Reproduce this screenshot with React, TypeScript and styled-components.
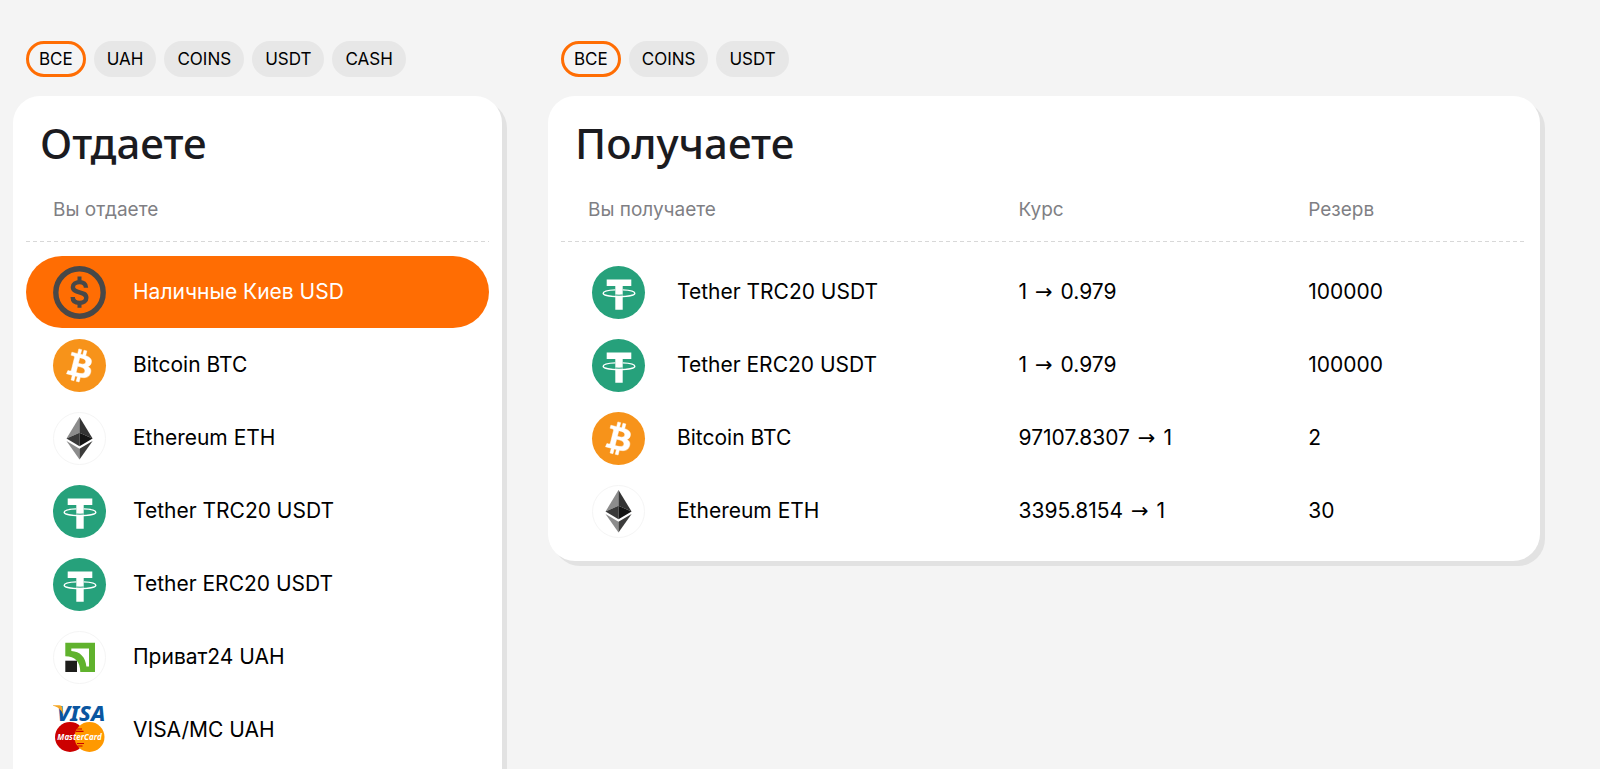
import React, { useState } from 'react';
import styled, { createGlobalStyle, css } from 'styled-components';

const GlobalStyle = createGlobalStyle`
  *, *::before, *::after { box-sizing: border-box; }
  body {
    margin: 0;
    background: #f4f4f4;
    color: #000;
    font-family: Inter, "Liberation Sans", sans-serif;
    overflow-x: hidden;
  }
`;

const orange = '#ff6d03';

const dashedRule = css`
  background: repeating-linear-gradient(90deg, #d8d8d8 0 4px, transparent 4px 7px) bottom / 100% 1px no-repeat;
`;

const Page = styled.main`
  display: grid;
  grid-template-columns: minmax(0, 489fr) minmax(0, 992fr);
  align-items: start;
  gap: 46px;
  padding: 41px 60px 40px 13px;
  height: 100vh;
  overflow: hidden;
`;

const Column = styled.section`
  display: flex;
  flex-direction: column;
  gap: 19px;
`;

const Filters = styled.div`
  display: flex;
  flex-wrap: wrap;
  gap: 8px;
  padding: 0 13px;
`;

const Chip = styled.button<{ $active: boolean }>`
  height: 36px;
  padding: 0 10px 1px;
  border: 3px solid ${(p) => (p.$active ? orange : '#e7e7e7')};
  border-radius: 18px;
  background: ${(p) => (p.$active ? 'transparent' : '#e7e7e7')};
  color: #000;
  font: 400 17px/20px Inter, "Liberation Sans", sans-serif;
  cursor: pointer;
`;

const Card = styled.div`
  padding: 23px 13px 14px;
  border-radius: 27px;
  background: #fff;
  box-shadow: 5px 5px 0 #e2e2e2;
`;

const Title = styled.h2`
  margin: 0;
  padding: 0 14px;
  color: #1b1b1f;
  font: 500 42px/48px "Noto Sans", "Open Sans", sans-serif;
`;

const ListHead = styled.div`
  ${dashedRule}
  height: 75px;
  padding: 31px 27px 0;
  color: #7f7f84;
  font-size: 19px;
  line-height: 24px;
`;

const List = styled.ul`
  display: flex;
  flex-direction: column;
  gap: 1px;
  margin: 0;
  padding: 14px 0 27px;
  list-style: none;
`;

const Option = styled.button<{ $active: boolean }>`
  display: flex;
  align-items: center;
  gap: 27px;
  width: 100%;
  height: 72px;
  padding: 0 27px;
  border: 0;
  border-radius: 36px;
  background: ${(p) => (p.$active ? orange : 'transparent')};
  color: ${(p) => (p.$active ? '#fff' : '#000')};
  font: 400 21px/28px Inter, "Liberation Sans", sans-serif;
  text-align: left;
  cursor: pointer;
`;

const Table = styled.table`
  display: block;
`;

const TableHead = styled.thead`
  display: block;
`;

const TableBody = styled.tbody`
  display: grid;
  gap: 1px;
  padding-top: 14px;
`;

const rowGrid = css`
  display: grid;
  grid-template-columns: 431fr 290fr 246fr;
`;

const HeadRow = styled.tr`
  ${rowGrid}
  ${dashedRule}
  height: 75px;
`;

const HeadCell = styled.th`
  padding: 31px 0 0 27px;
  color: #7f7f84;
  font-size: 19px;
  font-weight: 400;
  line-height: 24px;
  text-align: left;
`;

const Row = styled.tr`
  ${rowGrid}
  align-items: center;
  height: 72px;
`;

const Cell = styled.td`
  padding: 0 0 0 27px;
  font-size: 21px;
  line-height: 28px;
`;

const NameCell = styled(Cell)`
  display: flex;
  align-items: center;
  gap: 32px;
  padding-left: 31px;
`;

const Arrow = styled.span`
  margin: 0 2px;
  font-family: "DejaVu Sans", sans-serif;
`;

const Icon = styled.svg`
  flex: none;
  display: block;
  width: 53px;
  height: 53px;
  overflow: visible;
`;

type Coin = 'cash' | 'btc' | 'eth' | 'usdt' | 'privat' | 'card';

function CoinIcon({ coin }: { coin: Coin }) {
  switch (coin) {
    case 'cash':
      return (
        <Icon viewBox="0 0 53 53" fill="none" stroke="#484848" aria-hidden="true">
          <circle cx="26.5" cy="26.5" r="23.7" strokeWidth="5.4" />
          <path
            strokeWidth="4.4"
            d="M33 21.8C33 18 30.2 16.1 26.6 16.1C22.6 16.1 19.9 18 19.9 21C19.9 28.2 33.3 24.4 33.3 31.8C33.3 35.1 30.6 36.9 26.6 36.9C22.4 36.9 19.7 34.9 19.7 31"
          />
          <path strokeWidth="4" d="M26.5 10.5V16M26.5 37V41.8" />
        </Icon>
      );
    case 'btc':
      return (
        <Icon viewBox="0 0 32 32" aria-hidden="true">
          <circle cx="16" cy="16" r="16" fill="#f7931a" />
          <path
            fill="#fff"
            stroke="#fff"
            strokeWidth="0.3"
            d="M23.189 14.02c.314-2.096-1.283-3.223-3.465-3.975l.708-2.84-1.728-.43-.69 2.765c-.454-.114-.92-.22-1.385-.326l.695-2.783L15.596 6l-.708 2.839c-.376-.086-.746-.17-1.104-.26l.002-.009-2.384-.595-.46 1.846s1.283.294 1.256.312c.7.175.826.638.805 1.006l-.806 3.235c.048.012.11.03.18.057l-.183-.045-1.13 4.532c-.086.212-.303.531-.793.41.018.025-1.256-.313-1.256-.313l-.858 1.978 2.25.561c.418.105.828.215 1.231.318l-.715 2.872 1.727.43.708-2.84c.472.127.93.245 1.378.357l-.706 2.828 1.728.43.715-2.866c2.948.558 5.164.333 6.097-2.333.752-2.146-.037-3.385-1.588-4.192 1.13-.26 1.98-1.003 2.207-2.538zm-3.95 5.538c-.533 2.147-4.148.986-5.32.695l.95-3.805c1.172.293 4.929.872 4.37 3.11zm.535-5.569c-.487 1.953-3.495.96-4.47.717l.86-3.45c.975.243 4.118.696 3.61 2.733z"
          />
        </Icon>
      );
    case 'eth':
      return (
        <Icon viewBox="0 0 53 53" aria-hidden="true">
          <circle cx="26.5" cy="26.5" r="26" fill="#fff" stroke="#f5f5f5" />
          <path fill="#8c8c8c" d="M26.5 5L13.5 26.6L26.5 20.7Z" />
          <path fill="#343434" d="M26.5 5L39.6 26.6L26.5 20.7Z" />
          <path fill="#393939" d="M26.5 20.7L13.5 26.6L26.5 34.2Z" />
          <path fill="#141414" d="M26.5 20.7L39.6 26.6L26.5 34.2Z" />
          <path fill="#8c8c8c" d="M13.5 29.1L26.5 36.8V47.6Z" />
          <path fill="#3c3c3b" d="M39.6 29.1L26.5 36.8V47.6Z" />
        </Icon>
      );
    case 'usdt':
      return (
        <Icon viewBox="0 0 53 53" aria-hidden="true">
          <circle cx="26.5" cy="26.5" r="26.5" fill="#26a17b" />
          <path fill="#fff" d="M14.7 13.6H39.3V20H30.7V43.8H23.3V20H14.7Z" />
          <path
            fill="none"
            stroke="#fff"
            strokeWidth="1.4"
            d="M23.3 23.9C16.5 24.2 11.2 25.5 11.2 27.2C11.2 29.2 18.2 30.6 27 30.6C35.8 30.6 42.8 29.2 42.8 27.2C42.8 25.5 37.5 24.2 30.7 23.9"
          />
          <path fill="none" stroke="#26a17b" strokeWidth="1" d="M23.3 29C25.5 29.3 28.5 29.3 30.7 29" />
        </Icon>
      );
    case 'privat':
      return (
        <Icon viewBox="0 0 53 53" aria-hidden="true">
          <circle cx="26.5" cy="26.5" r="26" fill="#fff" stroke="#f5f5f5" />
          <path
            fill="#60b22d"
            fillRule="evenodd"
            d="M12.3 11.7H42V41H27.3C27.3 31 22 25.3 12.3 25.3ZM18.3 17.5V20C27 20.5 32.6 26 33.4 35.5H36V17.5Z"
          />
          <path fill="#1d1d1b" d="M12.3 29.7H24V41H12.3Z" />
        </Icon>
      );
    case 'card':
      return (
        <Icon viewBox="0 0 53 53" aria-hidden="true">
          <text x="4" y="17" fontFamily="Noto Sans, sans-serif" fontSize="22" fontWeight="800" fontStyle="italic" fill="#0a56a0">
            VISA
          </text>
          <path fill="#f5a623" d="M0 1.2H6.2C8 1.2 8.8 2 9.2 3.4L10.4 11C8.6 6 5.2 3 0 1.8Z" />
          <circle cx="17" cy="33" r="15" fill="#cc0000" />
          <circle cx="36.5" cy="33" r="15" fill="#ff9900" />
          <path stroke="#cc0000" strokeWidth="1.2" d="M24 25H29M22.8 27.3H30.5M24 39.5H31M24.5 42H29.5" />
          <text x="26.5" y="36" textAnchor="middle" fontFamily="Noto Sans, sans-serif" fontSize="8" fontWeight="700" fontStyle="italic" fill="#fff">
            MasterCard
          </text>
        </Icon>
      );
  }
}

const giveOptions: { name: string; coin: Coin }[] = [
  { name: 'Наличные Киев USD', coin: 'cash' },
  { name: 'Bitcoin BTC', coin: 'btc' },
  { name: 'Ethereum ETH', coin: 'eth' },
  { name: 'Tether TRC20 USDT', coin: 'usdt' },
  { name: 'Tether ERC20 USDT', coin: 'usdt' },
  { name: 'Приват24 UAH', coin: 'privat' },
  { name: 'VISA/MC UAH', coin: 'card' },
];

const receiveOptions: { name: string; coin: Coin; from: string; to: string; reserve: string }[] = [
  { name: 'Tether TRC20 USDT', coin: 'usdt', from: '1', to: '0.979', reserve: '100000' },
  { name: 'Tether ERC20 USDT', coin: 'usdt', from: '1', to: '0.979', reserve: '100000' },
  { name: 'Bitcoin BTC', coin: 'btc', from: '97107.8307', to: '1', reserve: '2' },
  { name: 'Ethereum ETH', coin: 'eth', from: '3395.8154', to: '1', reserve: '30' },
];

function FilterBar({ items }: { items: string[] }) {
  const [active, setActive] = useState(items[0]);
  return (
    <Filters>
      {items.map((item) => (
        <Chip key={item} type="button" $active={item === active} aria-pressed={item === active} onClick={() => setActive(item)}>
          {item}
        </Chip>
      ))}
    </Filters>
  );
}

export default function App() {
  const [selected, setSelected] = useState(giveOptions[0].name);
  return (
    <>
      <GlobalStyle />
      <Page>
        <Column>
          <FilterBar items={['ВСЕ', 'UAH', 'COINS', 'USDT', 'CASH']} />
          <Card>
            <Title>Отдаете</Title>
            <ListHead>Вы отдаете</ListHead>
            <List>
              {giveOptions.map((o) => (
                <li key={o.name}>
                  <Option type="button" $active={o.name === selected} aria-pressed={o.name === selected} onClick={() => setSelected(o.name)}>
                    <CoinIcon coin={o.coin} />
                    {o.name}
                  </Option>
                </li>
              ))}
            </List>
          </Card>
        </Column>
        <Column>
          <FilterBar items={['ВСЕ', 'COINS', 'USDT']} />
          <Card>
            <Title>Получаете</Title>
            <Table>
              <TableHead>
                <HeadRow>
                  <HeadCell scope="col">Вы получаете</HeadCell>
                  <HeadCell scope="col">Курс</HeadCell>
                  <HeadCell scope="col">Резерв</HeadCell>
                </HeadRow>
              </TableHead>
              <TableBody>
                {receiveOptions.map((o) => (
                  <Row key={o.name}>
                    <NameCell>
                      <CoinIcon coin={o.coin} />
                      {o.name}
                    </NameCell>
                    <Cell>
                      {o.from} <Arrow>→</Arrow> {o.to}
                    </Cell>
                    <Cell>{o.reserve}</Cell>
                  </Row>
                ))}
              </TableBody>
            </Table>
          </Card>
        </Column>
      </Page>
    </>
  );
}
